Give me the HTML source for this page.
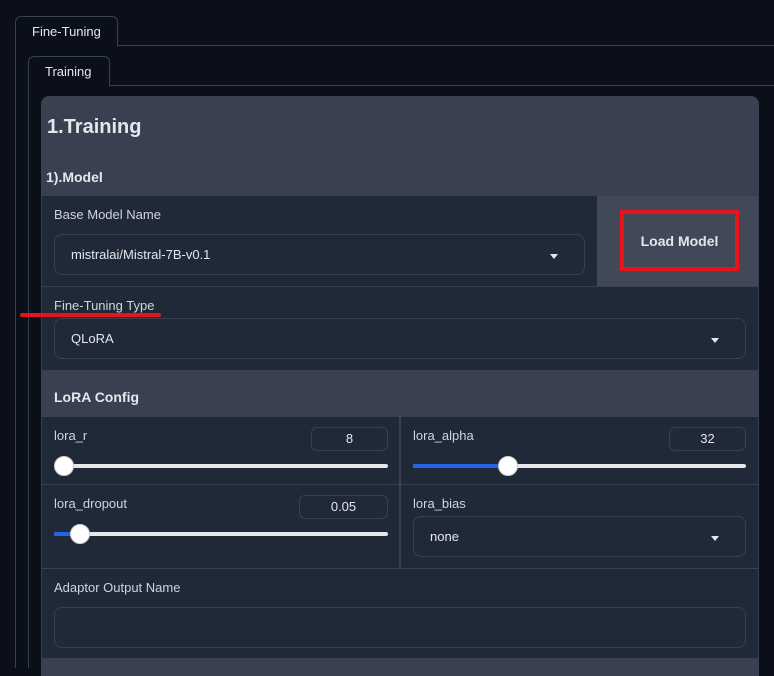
<!DOCTYPE html>
<html><head><style>
*{box-sizing:border-box;margin:0;padding:0}
body{width:774px;height:668px;overflow:hidden;background:#0b0f19;font-family:"Liberation Sans",sans-serif;color:#e5e7eb;position:relative}
.a{position:absolute}
.lbl{font-size:13px;color:#d1d5db}
.dd{position:absolute;border:1px solid #374151;border-radius:8px;background:#1f2937;font-size:13px;padding-left:16px;display:flex;align-items:center}
.tri{position:absolute;width:0;height:0;border-left:4px solid transparent;border-right:4px solid transparent;border-top:5px solid #e5e7eb}
.num{position:absolute;border:1px solid #374151;border-radius:6px;font-size:13px;text-align:center;line-height:22px;height:24px}
.track{position:absolute;height:4px;background:#e5e7eb;border-radius:2px}
.knob{position:absolute;width:20px;height:20px;border-radius:50%;background:#fff;border:1px solid #ccc}
</style></head><body>
<!-- outer tab -->
<div class="a" style="left:15px;top:16px;width:103px;height:30px;border:1px solid #374151;border-bottom:none;border-radius:6px 6px 0 0;background:#0b0f19;font-size:13px;padding:7px 0 0 16px;z-index:2">Fine-Tuning</div>
<div class="a" style="left:117px;top:45px;width:657px;height:1px;background:#374151"></div>
<div class="a" style="left:15px;top:45px;width:1px;height:623px;background:#374151"></div>
<!-- inner tab -->
<div class="a" style="left:28px;top:56px;width:82px;height:30px;border:1px solid #374151;border-bottom:none;border-radius:6px 6px 0 0;font-size:13px;padding:7px 0 0 16px;z-index:2">Training</div>
<div class="a" style="left:109px;top:85px;width:665px;height:1px;background:#374151"></div>
<div class="a" style="left:28px;top:85px;width:1px;height:583px;background:#374151"></div>
<!-- panel -->
<div class="a" style="left:41px;top:96px;width:718px;height:580px;background:#394150;border-radius:8px 8px 0 0"></div>
<div class="a" style="left:47px;top:116px;font-size:20px;font-weight:bold">1.Training</div>
<div class="a" style="left:46px;top:169px;font-size:14px;font-weight:bold">1).Model</div>
<!-- model row -->
<div class="a" style="left:42px;top:196px;width:555px;height:90px;background:#1f2937"></div>
<div class="a" style="left:597px;top:196px;width:161px;height:90px;background:#414958"></div>
<div class="a lbl" style="left:54px;top:207px">Base Model Name</div>
<div class="dd" style="left:54px;top:234px;width:531px;height:41px">mistralai/Mistral-7B-v0.1</div>
<div class="tri" style="left:550px;top:254px"></div>
<div class="a" style="left:620px;top:210px;width:119px;height:61px;border:4px solid #e8141c;font-size:14px;font-weight:bold;display:flex;align-items:center;justify-content:center">Load Model</div>
<!-- fine-tuning type -->
<div class="a" style="left:42px;top:287px;width:716px;height:83px;background:#1f2937"></div>
<div class="a lbl" style="left:54px;top:298px">Fine-Tuning Type</div>
<div class="a" style="left:20px;top:313px;width:141px;height:4px;background:#e8141c;border-radius:2px"></div>
<div class="dd" style="left:54px;top:318px;width:692px;height:41px">QLoRA</div>
<div class="tri" style="left:711px;top:338px"></div>
<div class="a" style="left:54px;top:389px;font-size:14px;font-weight:bold">LoRA Config</div>
<!-- sliders -->
<div class="a" style="left:42px;top:417px;width:357px;height:67px;background:#1f2937"></div>
<div class="a" style="left:401px;top:417px;width:357px;height:67px;background:#1f2937"></div>
<div class="a" style="left:42px;top:485px;width:357px;height:83px;background:#1f2937"></div>
<div class="a" style="left:401px;top:485px;width:357px;height:83px;background:#1f2937"></div>
<div class="a lbl" style="left:54px;top:428px">lora_r</div>
<div class="num" style="left:311px;top:427px;width:77px">8</div>
<div class="track" style="left:54px;top:464px;width:334px"></div>
<div class="knob" style="left:54px;top:456px"></div>
<div class="a lbl" style="left:413px;top:428px">lora_alpha</div>
<div class="num" style="left:669px;top:427px;width:77px">32</div>
<div class="track" style="left:413px;top:464px;width:333px"></div>
<div class="track" style="left:413px;top:464px;width:90px;background:#2563eb"></div>
<div class="knob" style="left:498px;top:456px"></div>
<div class="a lbl" style="left:54px;top:496px">lora_dropout</div>
<div class="num" style="left:299px;top:495px;width:89px">0.05</div>
<div class="track" style="left:54px;top:532px;width:334px"></div>
<div class="track" style="left:54px;top:532px;width:20px;background:#2563eb"></div>
<div class="knob" style="left:70px;top:524px"></div>
<div class="a lbl" style="left:413px;top:496px">lora_bias</div>
<div class="dd" style="left:413px;top:516px;width:333px;height:41px">none</div>
<div class="tri" style="left:711px;top:536px"></div>
<!-- adaptor -->
<div class="a" style="left:42px;top:569px;width:716px;height:89px;background:#1f2937"></div>
<div class="a lbl" style="left:54px;top:580px">Adaptor Output Name</div>
<div class="dd" style="left:54px;top:607px;width:692px;height:41px"></div>
</body></html>
